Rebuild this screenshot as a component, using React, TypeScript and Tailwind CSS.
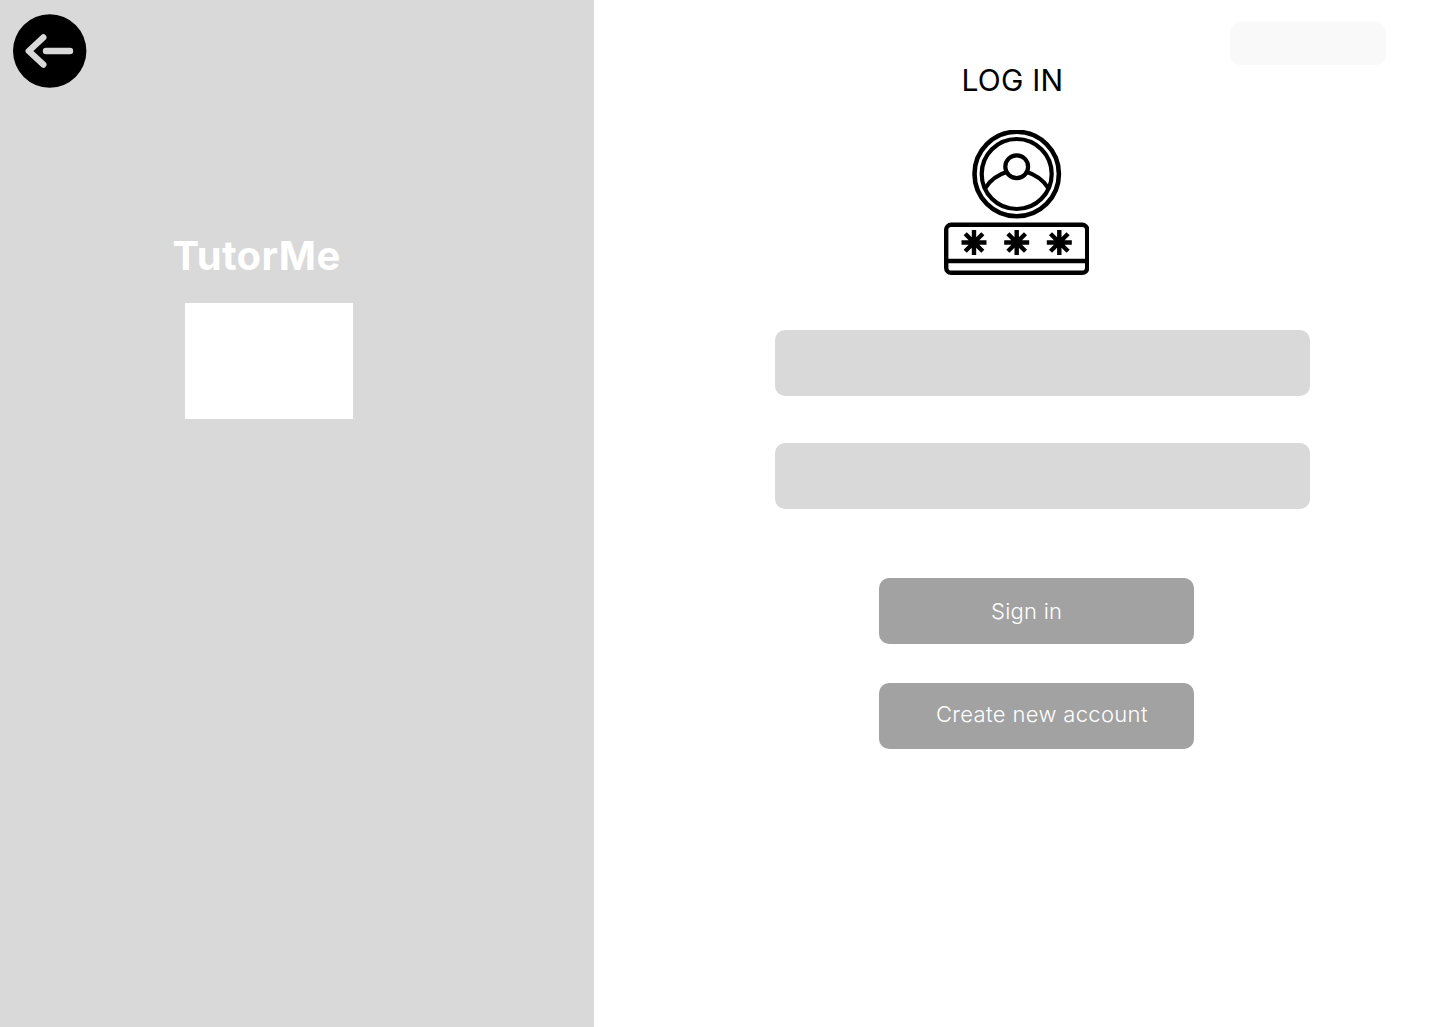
import React from "react";

const BackIcon = () => (
  <svg width="74" height="74" viewBox="0 0 74 74" className="block">
    <circle cx="36.7" cy="37" r="36.7" fill="#000" />
    <path
      d="M30.3 23.5 15.8 37 30.3 50.5M33 37H57"
      fill="none"
      stroke="#d9d9d9"
      strokeWidth="6.4"
      strokeLinecap="round"
      strokeLinejoin="round"
    />
  </svg>
);

const Star = ({ x }: { x: number }) => (
  <g transform={`translate(${x} 112.5)`} stroke="#000" strokeWidth="4.4" strokeLinecap="butt">
    <path d="M0-12.5V12.5M-12.5 0H12.5M-8.8-8.8 8.8 8.8M-8.8 8.8 8.8-8.8" />
  </g>
);

const LoginIcon = () => (
  <svg width="145" height="145" viewBox="0 0 145 145" fill="none" className="block">
    <g stroke="#000">
      <circle cx="72.7" cy="44" r="42.2" strokeWidth="4.6" />
      <circle cx="72.7" cy="44" r="35" strokeWidth="4.2" />
      <circle cx="72.7" cy="36.7" r="11.4" strokeWidth="4.2" />
      <path d="M41 58.5C46 50 54 44.5 64 41.5M81.5 41.5C91.5 44.5 99.5 50 104.5 58.5" strokeWidth="4.2" />
      <rect x="2.2" y="94.8" width="141" height="48" rx="5" strokeWidth="4.4" />
      <path d="M2.5 131H143" strokeWidth="4.4" />
    </g>
    <Star x={30} />
    <Star x={72.7} />
    <Star x={115.3} />
  </svg>
);

export default function App() {
  return (
    <div
      className="flex w-[1444px] h-[1027px] overflow-hidden bg-white"
      style={{ fontFamily: "Inter, sans-serif" }}
    >
      <div className="w-[594px] h-full bg-[#d9d9d9] pt-[14px] pl-[13px]">
        <button className="block">
          <BackIcon />
        </button>
        <h1 className="mt-[144px] ml-[159.5px] text-[40px] leading-[48px] font-bold tracking-[0.4px] text-white">
          TutorMe
        </h1>
        <div className="mt-[23px] ml-[172px] w-[168px] h-[116px] bg-white" />
      </div>

      <div className="flex-1 flex flex-col pt-[22px]">
        <div className="self-end mr-[58px] w-[156px] h-[43px] rounded-[10px] bg-[#f9f9f9]" />
        <h2 className="ml-[367.5px] text-[30px] leading-[30px] font-normal tracking-[0.2px] text-black">LOG IN</h2>
        <div className="mt-[35px] ml-[350px]">
          <LoginIcon />
        </div>
        <div className="mt-[55px] ml-[181px] w-[535px] flex flex-col gap-[47px]">
          <div className="h-[66px] rounded-[10px] bg-[#d9d9d9]" />
          <div className="h-[66px] rounded-[10px] bg-[#d9d9d9]" />
        </div>
        <div className="mt-[69px] ml-[285px] w-[315px] flex flex-col gap-[39px]">
          <button className="h-[66px] rounded-[10px] bg-[#a2a2a2] pl-[112px] text-left text-[22px] font-light tracking-[0.25px] text-white">
            Sign in
          </button>
          <button className="h-[66px] rounded-[10px] bg-[#a2a2a2] pl-[57px] pb-[3px] text-left text-[22px] font-light tracking-[0.35px] text-white">
            Create new account
          </button>
        </div>
      </div>
    </div>
  );
}
